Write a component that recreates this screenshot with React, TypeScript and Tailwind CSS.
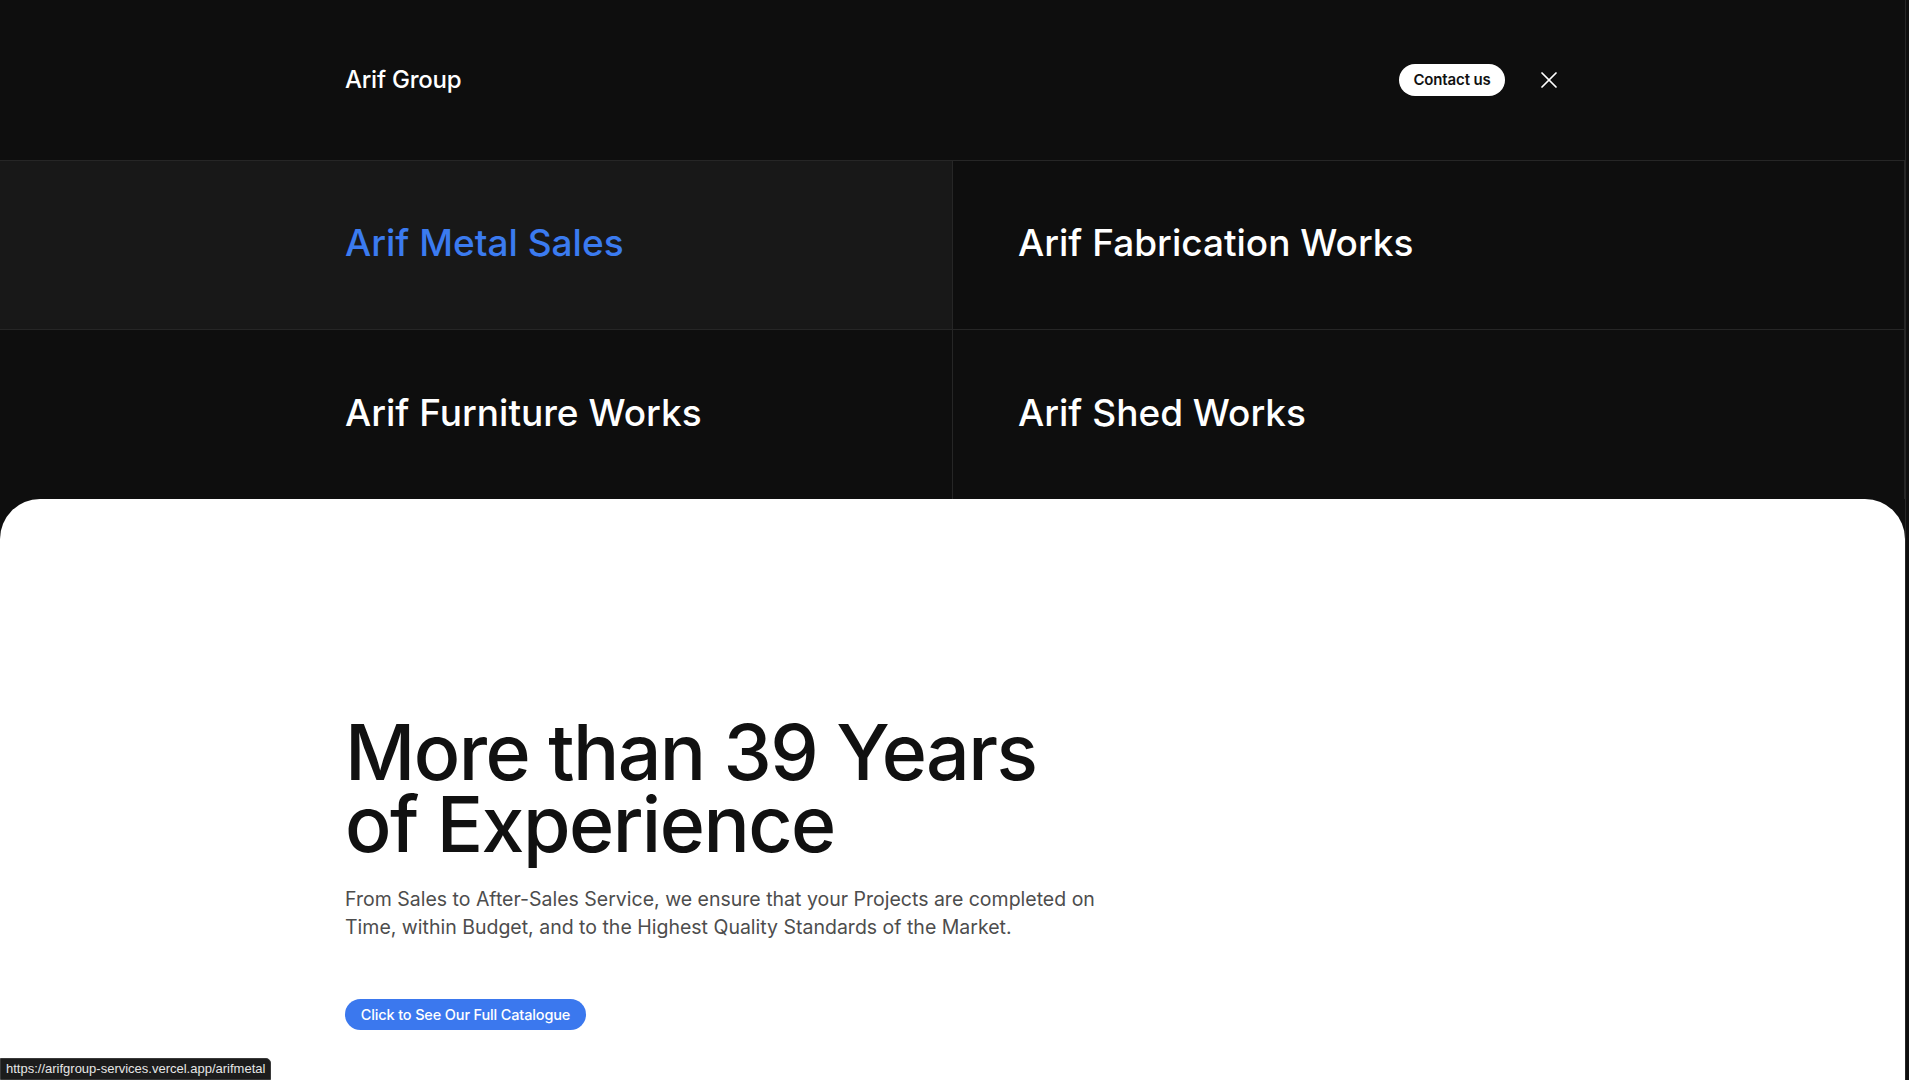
import { X } from "lucide-react";

const companies = [
	{ name: "Arif Metal Sales", active: true, side: "left" },
	{ name: "Arif Fabrication Works", active: false, side: "right" },
	{ name: "Arif Furniture Works", active: false, side: "left" },
	{ name: "Arif Shed Works", active: false, side: "right" },
];

export default function App() {
	return (
		<div
			className="min-h-screen bg-[#0e0e0e] text-white"
			style={{ fontFamily: "Inter, 'Noto Sans', sans-serif" }}
		>
			<div className="w-[1906px] min-h-screen border-r border-[#262626] flex flex-col">
				<header className="h-[160px] flex items-center justify-between pl-[345px] pr-[342px]">
					<span className="text-[24px] font-medium tracking-[-0.01em]">Arif Group</span>
					<div className="flex items-center gap-[30px]">
						<button className="h-[32px] w-[106px] rounded-full bg-white text-[#111] text-[15px] font-semibold tracking-[-0.01em]">
							Contact us
						</button>
						<X className="w-[28px] h-[28px] text-white" strokeWidth={1.5} />
					</div>
				</header>

				<div className="grid grid-cols-[953px_1fr] border-t border-[#262626]">
					{companies.map((c, i) => (
						<div
							key={c.name}
							className={`h-[169px] pb-[4px] flex items-center border-r border-[#262626] ${i < 2 ? "border-b" : ""} ${c.side === "left" ? "pl-[345px]" : "pl-[65px]"} ${c.active ? "bg-[#181818]" : ""}`}
						>
							<span
								className={`text-[37px] font-medium tracking-normal ${c.active ? "text-[#3b7bf0]" : "text-white"}`}
							>
								{c.name}
							</span>
						</div>
					))}
				</div>

				<section className="flex-1 bg-white rounded-t-[40px] pl-[345px] pt-[217px] pb-[60px] text-[#111]">
					<h1 className="text-[77px] font-medium tracking-[-0.02em]">
						<span className="block h-[72px] leading-[72px]">More than 39 Years</span>
						<span className="block h-[72px] leading-[72px]">of Experience</span>
					</h1>
					<p className="mt-[25px] max-w-[760px] text-[19.5px] leading-[28px] text-[#4d4d4d]">
						From Sales to After-Sales Service, we ensure that your Projects are completed on Time, within
						Budget, and to the Highest Quality Standards of the Market.
					</p>
					<button className="mt-[58px] h-[31px] w-[241px] rounded-full bg-[#3b78ee] text-white text-[14.5px] font-medium tracking-[-0.01em]">
						Click to See Our Full Catalogue
					</button>
				</section>
			</div>

			<div
				className="fixed left-0 bottom-0 h-[22px] px-[5px] flex items-center bg-[#1c1c1c] border border-[#3a3a3a] rounded-tr-[5px] text-[13px] text-[#e6e6e6]"
				style={{ fontFamily: "'Liberation Sans', Arial, sans-serif" }}
			>
				https://arifgroup-services.vercel.app/arifmetal
			</div>
		</div>
	);
}
